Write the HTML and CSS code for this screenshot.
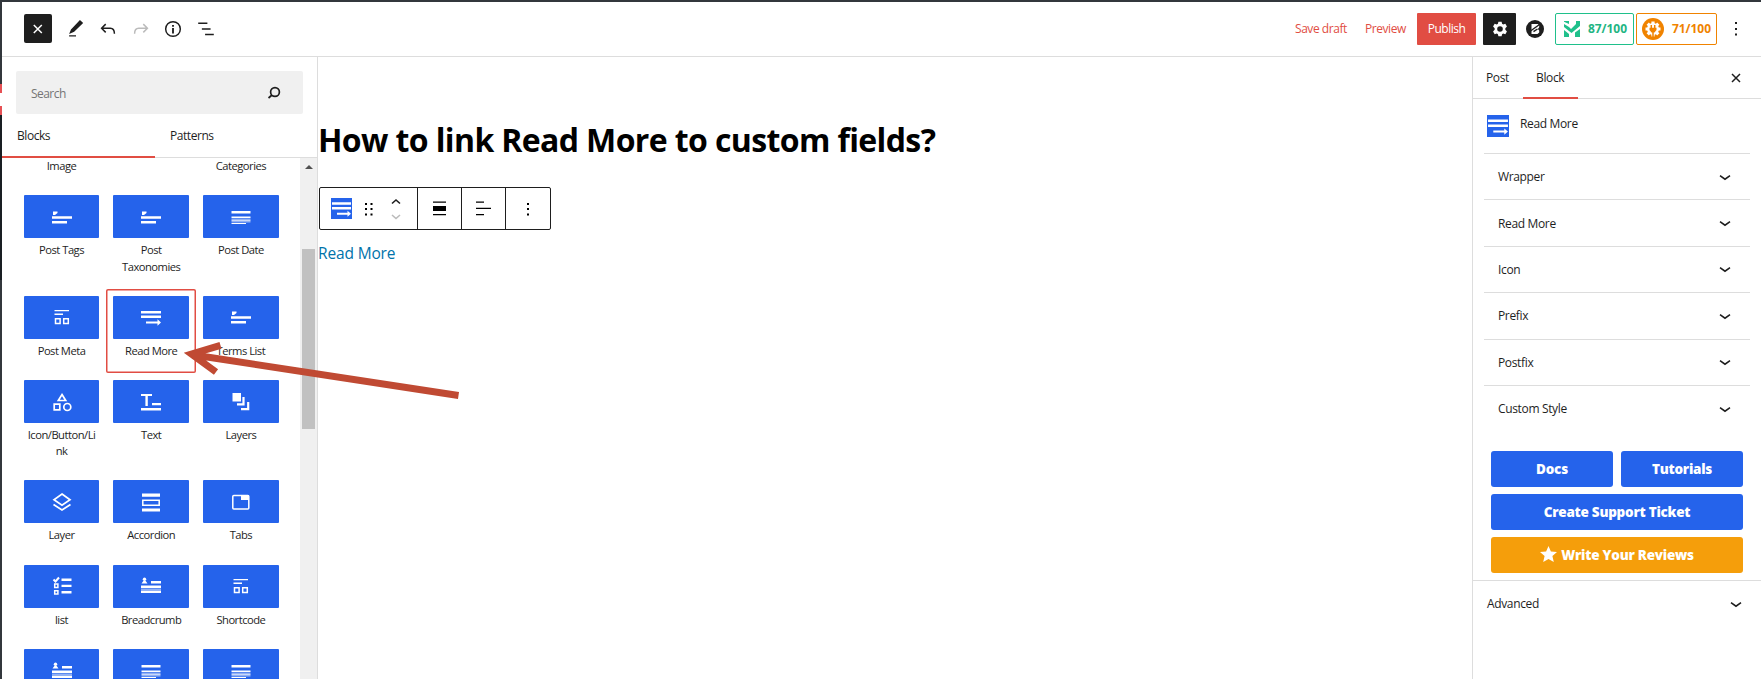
FILE: index.html
```html
<!DOCTYPE html>
<html lang="en">
<head>
<meta charset="utf-8">
<title>Edit Post</title>
<link rel="stylesheet" href="styles.css">
</head>
<body>
<svg width="0" height="0" class="defs">
  <symbol id="tag" viewBox="0 0 20 20"><path d="M0 9.200h20v2.500H0zM0 14h15v2.500H0zM1 8V4.500h4.500V6L3 8z"/></symbol>
  <symbol id="date" viewBox="0 0 20 20"><path d="M.5 4h19v2.500H.5zM.5 9.500h19v1.800H.5zM.5 12.500h19v1.200H.5zM.5 14.500h19v.8H.5zM.5 16H15v1H.5z"/></symbol>
  <symbol id="meta" viewBox="0 0 20 20"><path d="M2.500 3H17v1.200H2.500zM2.500 6.500H11V8H2.500z"/><path d="M3.500 11.700h4.600v4.800H3.500zM11.700 11.700h4.600v4.800h-4.600z" fill="none" stroke="#fff" stroke-width="1.500"/></symbol>
  <symbol id="more" viewBox="0 0 20 20"><path d="M0 4h20v2.500H0zM0 8.500h20V11H0zM5 14.500h11.500v-2.200l3.500 3.200-3.500 3.200v-2.200H5z"/></symbol>
  <symbol id="shapes" viewBox="0 0 20 20"><path d="M10 2.500l3.700 6H6.300zM2.200 12.200h5.600v5.600H2.200z" fill="none" stroke="#fff" stroke-width="1.700"/><circle cx="15.300" cy="15" r="3.500" fill="none" stroke="#fff" stroke-width="1.700"/></symbol>
  <symbol id="text" viewBox="0 0 20 20"><path d="M0 2h11v2H6.800v10H4.400V4H0zM11 11h9v2.300h-9zM0 16h20v2.500H0z"/></symbol>
  <symbol id="layers" viewBox="0 0 20 20"><path d="M1.500 1H10v8.500H1.500z"/><path d="M12.500 5v7.300H6M17.200 10v7.200H10" fill="none" stroke="#fff" stroke-width="2.200"/></symbol>
  <symbol id="layer" viewBox="0 0 20 20"><path d="M10 2l8 5.800-8 5.400-8-5.400zM1.500 12.500L10 18l8.500-5.500" fill="none" stroke="#fff" stroke-width="1.700"/></symbol>
  <symbol id="accordion" viewBox="0 0 20 20"><path d="M1 1.500h18v3.300H1zM1 16.500h18v3H1z"/><path d="M1.800 8.200h16.400v5H1.800z" fill="none" stroke="#fff" stroke-width="1.500"/></symbol>
  <symbol id="tabs" viewBox="0 0 20 20"><rect x="1.800" y="3.500" width="16" height="13.500" rx="1" fill="none" stroke="#fff" stroke-width="1.500"/><path d="M10 3h8v5h-8z"/></symbol>
  <symbol id="list" viewBox="0 0 20 20"><path d="M9.500 2.500h10V5h-10zM9.500 8.700h10v2.400h-10zM9.500 15h10v2.400h-10z"/><path d="M1.500 3.500l2 2L7 1.500" fill="none" stroke="#fff" stroke-width="2"/><path d="M2.700 8.100h3.200v3.400H2.700zM2.700 14.700h3.200v3.200H2.700z" fill="none" stroke="#fff" stroke-width="1.500"/></symbol>
  <symbol id="crumb" viewBox="0 0 20 20"><circle cx="3.500" cy="3.200" r="1.700"/><path d="M.5 7.500l2-2.700h2l2 2.700zM10 5h10v2.500H10zM0 9.500h20V12H0zM0 12.800h20v.8H0zM0 14.500h20V17H0z"/></symbol>
  <symbol id="chev" viewBox="0 0 12 8"><path d="M1 1.700l5 3.500 5-3.500" fill="none" stroke="#1e1e1e" stroke-width="1.600"/></symbol>
</svg>

<div class="app">
  <div class="admin-edge"></div>
  <div class="editor">
    <header class="header">
      <div class="tools">
        <button class="toggle"><svg width="28" height="29" viewBox="0 0 28 29"><path d="M9.800 11l8 8M17.800 11l-8 8" stroke="#fff" stroke-width="1.500"/></svg></button>
        <svg class="tool first" viewBox="0 0 24 24"><path d="M4.500 17.500l2-5L16.300 2.200l3.500 3.300-9.800 9.500zM4.500 18.800H12v1.500H4.500z"/></svg>
        <svg class="tool" viewBox="0 0 24 24"><path d="M9.500 6.700L5 11.200l4.500 4.500M5 11.200h9.500c3 0 4.500 1.500 4.500 6" fill="none" stroke="#1e1e1e" stroke-width="1.600"/></svg>
        <svg class="tool" viewBox="0 0 24 24"><path d="M14.500 6.700l4.500 4.500-4.500 4.500M19 11.200H9.500c-3 0-4.500 1.500-4.500 6" fill="none" stroke="#bbb" stroke-width="1.600"/></svg>
        <svg class="tool" viewBox="0 0 24 24"><circle cx="12" cy="12" r="8" fill="none" stroke="#1e1e1e" stroke-width="1.600"/><path d="M11 7.500h2v2h-2zM11 10.800h2V17h-2z"/></svg>
        <svg class="tool" viewBox="0 0 24 24"><path d="M3.500 5h10v1.500h-10zM7.500 11.200h9.500v1.500H7.500zM11 17.300h9.500v1.500H11z"/></svg>
      </div>
      <div class="actions">
        <a class="link save">Save draft</a>
        <a class="link preview">Preview</a>
        <button class="publish">Publish</button>
        <button class="settings"><svg width="16" height="16" viewBox="0 0 24 24"><path d="M9.600 1h4.800l.7 3.200 1.700 1 3.200-1 2.400 4.200-2.400 2.400v2.400l2.400 2.400-2.400 4.200-3.200-1-1.700 1-.7 3.200H9.600l-.7-3.200-1.700-1-3.200 1-2.400-4.200L4 13.200v-2.400L1.600 8.400 4 4.200l3.200 1 1.700-1z" fill="#fff"/><circle cx="12" cy="12" r="4.200" fill="#1e1e1e"/></svg></button>
        <svg class="blockera" width="18" height="18" viewBox="0 0 18 18"><circle cx="9" cy="9" r="9" fill="#1e1e1e"/><path d="M5.500 4h6.300l1.400 1.300v2L11.900 9l1.300 1.500v2L11.500 14h-6z" fill="#fff"/><path d="M4.500 11L13.500 4.500M7.500 11.700l4-2.700" stroke="#1e1e1e" stroke-width="1.400"/></svg>
        <div class="score green"><svg width="16" height="16" viewBox="0 0 16 16"><path d="M0 0h5v3L0 .8zM0 3l5 3 2 2 5-5V0h4v5l-8.500 7L0 6zM0 9l5 4v3H0zM11 11.500L16 8v8h-5z" fill="#1fc08b"/></svg><span>87/100</span></div>
        <div class="score orange"><svg width="22" height="22" viewBox="0 0 22 22"><circle cx="11" cy="11" r="11" fill="#f08300"/><g stroke="#fff" stroke-width="3.200"><path d="M11 3.500v15M3.500 11h15M5.700 5.700l10.600 10.600M16.300 5.700L5.700 16.300"/></g><circle cx="11" cy="11" r="6" fill="#fff"/><path d="M9.300 7v3M12.700 7v3M11 13v6" stroke="#f08300" stroke-width="1.500"/><path d="M7.500 9.700h7V12L12.500 14.500h-3L7.500 12z" fill="#f08300"/></svg><span>71/100</span></div>
        <svg class="kebab" width="4" height="16" viewBox="0 0 4 16"><path d="M1 1h2v2H1zM1 7h2v2H1zM1 12.500h2v2H1z" fill="#1e1e1e"/></svg>
      </div>
    </header>

    <div class="body">
      <aside class="inserter">
        <div class="search"><span>Search</span><svg width="14" height="14" viewBox="0 0 14 14"><circle cx="8" cy="6" r="4.400" fill="none" stroke="#1e1e1e" stroke-width="1.700"/><path d="M5 9l-3.500 3" stroke="#1e1e1e" stroke-width="1.700"/></svg></div>
        <div class="tabs"><div class="tab active">Blocks</div><div class="tab">Patterns</div></div>
        <div class="scroller">
          <div class="grid">
            <div class="cut">Image</div><div class="cut"></div><div class="cut">Categories</div>
            <div class="cell"><i><svg><use href="#tag"/></svg></i><span>Post Tags</span></div>
            <div class="cell"><i><svg><use href="#tag"/></svg></i><span>Post Taxonomies</span></div>
            <div class="cell"><i><svg><use href="#date"/></svg></i><span>Post Date</span></div>
            <div class="cell"><i><svg><use href="#meta"/></svg></i><span>Post Meta</span></div>
            <div class="cell picked"><i><svg><use href="#more"/></svg></i><span>Read More</span></div>
            <div class="cell"><i><svg><use href="#tag"/></svg></i><span>Terms List</span></div>
            <div class="cell"><i><svg><use href="#shapes"/></svg></i><span>Icon/Button/Li<br>nk</span></div>
            <div class="cell"><i><svg><use href="#text"/></svg></i><span>Text</span></div>
            <div class="cell"><i><svg><use href="#layers"/></svg></i><span>Layers</span></div>
            <div class="cell"><i><svg><use href="#layer"/></svg></i><span>Layer</span></div>
            <div class="cell"><i><svg><use href="#accordion"/></svg></i><span>Accordion</span></div>
            <div class="cell"><i><svg><use href="#tabs"/></svg></i><span>Tabs</span></div>
            <div class="cell"><i><svg><use href="#list"/></svg></i><span>list</span></div>
            <div class="cell"><i><svg><use href="#crumb"/></svg></i><span>Breadcrumb</span></div>
            <div class="cell"><i><svg><use href="#meta"/></svg></i><span>Shortcode</span></div>
            <div class="cell"><i><svg><use href="#crumb"/></svg></i></div>
            <div class="cell"><i><svg><use href="#date"/></svg></i></div>
            <div class="cell"><i><svg><use href="#date"/></svg></i></div>
          </div>
          <div class="scrollbar"><svg width="8" height="4" viewBox="0 0 8 4"><path d="M0 4l4-4 4 4z" fill="#505050"/></svg><div class="thumb"></div></div>
        </div>
      </aside>

      <main class="canvas">
        <h1>How to link Read More to custom fields?</h1>
        <div class="toolbar">
          <div class="group wide">
            <svg width="21" height="21" viewBox="0 0 21 21"><path d="M0 0h21v21H0z" fill="#2563eb"/><path d="M1 4.300h19v2.500H1zM1 9h19v2.500H1zM6 14.800h10.500v-2l3.500 3-3.500 3v-2H6z" fill="#fff"/></svg>
            <svg class="drag" width="8" height="14" viewBox="0 0 8 14"><path d="M0 1h2v2H0zM5.500 1h2v2h-2zM0 6h2v2H0zM5.500 6h2v2h-2zM0 11.500h2v2H0zM5.500 11.500h2v2h-2z"/></svg>
            <svg class="mover" width="10" height="22" viewBox="0 0 10 22"><path d="M1 5.500L5 2l4 3.500" fill="none" stroke="#1e1e1e" stroke-width="1.600"/><path d="M1 17l4 3.500L9 17" fill="none" stroke="#bbb" stroke-width="1.600"/></svg>
          </div>
          <div class="group"><svg width="13" height="15" viewBox="0 0 13 15"><path d="M0 .5h13v1.200H0zM0 5h13v5H0zM0 13h13v1.200H0z"/></svg></div>
          <div class="group"><svg width="15" height="15" viewBox="0 0 15 15"><path d="M0 .5h8v1.200H0zM0 6.700h15v1.200H0zM0 13h8v1.200H0z"/></svg></div>
          <div class="group"><svg width="4" height="14" viewBox="0 0 4 14"><path d="M1 1h2v2H1zM1 6h2v2H1zM1 11.500h2v2H1z"/></svg></div>
        </div>
        <a class="readmore">Read More</a>
      </main>

      <aside class="sidebar">
        <div class="side-tabs"><span class="post">Post</span><span class="block">Block</span><svg width="10" height="10" viewBox="0 0 10 10"><path d="M1 1l8 8M9 1L1 9" stroke="#1e1e1e" stroke-width="1.500"/></svg></div>
        <div class="card"><svg width="22" height="22" viewBox="0 0 21 21"><path d="M0 0h21v21H0z" fill="#2563eb"/><path d="M1 4.300h19v2.500H1zM1 9h19v2.500H1zM6 14.800h10.500v-2l3.500 3-3.500 3v-2H6z" fill="#fff"/></svg><span>Read More</span></div>
        <div class="panels">
          <div class="panel">Wrapper<svg><use href="#chev"/></svg></div>
          <div class="panel">Read More<svg><use href="#chev"/></svg></div>
          <div class="panel">Icon<svg><use href="#chev"/></svg></div>
          <div class="panel">Prefix<svg><use href="#chev"/></svg></div>
          <div class="panel">Postfix<svg><use href="#chev"/></svg></div>
          <div class="panel">Custom Style<svg><use href="#chev"/></svg></div>
        </div>
        <div class="buttons">
          <a class="btn">Docs</a><a class="btn">Tutorials</a>
          <a class="btn full">Create Support Ticket</a>
          <a class="btn full review"><svg width="17" height="17" viewBox="0 0 17 17"><path d="M8.500 0l2.400 5.600 6.100.5-4.600 4 1.400 6-5.300-3.200-5.300 3.200 1.400-6L0 6.100l6.100-.5z" fill="#fff"/></svg><span>Write Your Reviews</span></a>
        </div>
        <div class="panel advanced">Advanced<svg><use href="#chev"/></svg></div>
      </aside>
    </div>
  </div>
  <svg class="arrow" width="290" height="60" viewBox="0 0 290 60"><path d="M286.500 55.500L22 15M48.500 5.300L19.500 14 44 32" fill="none" stroke="#c04a33" stroke-width="7"/></svg>
</div>
</body>
</html>
```

FILE: styles.css
```css
* { box-sizing: border-box; }
body { margin: 0; font-family: "Open Sans", "Noto Sans", sans-serif; font-size: 12px; letter-spacing: -.35px; color: #1e1e1e; background: #fff; }
button { border: 0; padding: 0; font: inherit; letter-spacing: inherit; }
svg { display: block; flex: none; }
.defs { position: absolute; }
.app { position: relative; display: flex; width: 1761px; height: 679px; overflow: hidden; border-top: 2px solid #32373c; }
.admin-edge { width: 2px; background: linear-gradient(#32373c 0 82px, #e65054 82px 91px, #fff 91px 104px, #e65054 104px 113px, #191e23 113px 278px, #32373c 278px); }
.editor { flex: 1; display: flex; flex-direction: column; min-width: 0; }
.header { height: 55px; flex: none; border-bottom: 1px solid #ddd; display: flex; justify-content: space-between; padding-top: 11px; }
.tools { display: flex; padding: 1px 0 0 22px; align-items: flex-start; }
.toggle { width: 28px; height: 29px; background: #1e1e1e; border-radius: 2px; }
.tool { width: 22px; height: 22px; margin: 4px 5.200px 0; fill: #1e1e1e; }
.tool.first { margin-left: 13px; }
.actions { display: flex; align-items: center; height: 32px; color: #e14d43; }
.link { margin-top: -1px; letter-spacing: -.450px; }
.save { width: 70px; }
.preview { width: 52px; }
.publish { width: 59px; height: 32px; padding-bottom: 1px; background: #e14d43; color: #fff; border-radius: 1px; letter-spacing: -.500px; }
.settings { width: 33px; height: 32px; background: #1e1e1e; border-radius: 1px; margin-left: 7px; display: flex; align-items: center; justify-content: center; }
.blockera { margin: 0 11px 0 10px; }
.score { width: 79px; height: 32px; border: 1px solid; border-radius: 2px; display: flex; align-items: center; font-weight: 700; font-size: 12px; letter-spacing: -.050px; }
.score span { margin-top: -1px; }
.green { color: #1fb583; border-color: #1fc08b; padding-left: 8px; gap: 8px; }
.orange { width: 81px; color: #f08300; margin-left: 2px; padding-left: 5px; gap: 8px; }
.kebab { margin: 0 23px 0 17px; }
.body { flex: 1; display: flex; min-height: 0; }
.inserter { width: 316px; border-right: 1px solid #ddd; padding-top: 14px; display: flex; flex-direction: column; }
.search { width: 287px; height: 43px; flex: none; margin-left: 14px; padding: 0 22px 0 15px; background: #f0f0f0; border-radius: 2px; display: flex; align-items: center; justify-content: space-between; color: #757575; letter-spacing: -.550px; }
.search span { margin-top: 1px; }
.tabs { height: 44px; flex: none; display: flex; border-bottom: 1px solid #ddd; }
.tab { width: 153px; height: 44px; padding-left: 15px; line-height: 43px; letter-spacing: -.450px; font-weight: 500; }
.tab.active { border-bottom: 2px solid #e14d43; }
.scroller { flex: 1; min-height: 0; overflow: hidden; display: flex; justify-content: space-between; }
.grid { display: grid; grid-template-columns: repeat(3, 89.700px); grid-auto-rows: max-content; margin-left: 14.700px; align-content: start; font-size: 11.200px; line-height: 16.200px; text-align: center; letter-spacing: -.500px; }
.cut { height: 30.300px; line-height: 15px; }
.cell { padding: 7px 7px 14px; min-height: 84.350px; }
.cell i { display: flex; align-items: center; justify-content: center; height: 43px; margin-bottom: 4px; background: #2563eb; border-radius: 1px; }
.cell i svg { width: 20px; height: 20px; fill: #fff; }
.cell span { display: block; }
.picked { box-shadow: inset 0 0 0 1.500px #e14d43; border-radius: 2px; }
.scrollbar { width: 17px; background: #f0f0f0; display: flex; flex-direction: column; align-items: center; padding-top: 7px; }
.thumb { width: 13px; height: 180px; margin-top: 80px; background: #c1c1c1; }
.canvas { flex: 1; padding-left: 1px; }
.canvas h1 { margin: 61px 0 0 -1px; font-size: 32px; line-height: 44px; color: #000; white-space: nowrap; letter-spacing: -.620px; }
.toolbar { width: 232px; height: 43px; margin-top: 25px; border: 1px solid #1e1e1e; border-radius: 2px; display: flex; }
.group { width: 44px; display: flex; align-items: center; justify-content: center; }
.group + .group { border-left: 1px solid #1e1e1e; }
.group.wide { width: 97px; justify-content: flex-start; padding-left: 11px; }
.drag { margin-left: 13px; }
.mover { margin-left: 18px; }
.readmore { display: block; margin: 11px 0 0 -1px; font-size: 15.500px; line-height: 24px; letter-spacing: -.150px; color: #0073aa; }
.sidebar { width: 289px; border-left: 1px solid #ddd; }
.side-tabs { height: 42px; border-bottom: 1px solid #ddd; display: flex; align-items: center; padding-left: 13px; }
.side-tabs .post { width: 37px; }
.side-tabs .block { width: 55px; height: 42px; padding-left: 13px; line-height: 42px; border-bottom: 2px solid #e14d43; }
.side-tabs svg { margin-left: 153px; }
.card { display: flex; height: 54px; padding: 16px 0 0 14px; gap: 11px; }
.panels { margin: 0 11px; }
.panel { height: 46.400px; border-top: 1px solid #ddd; padding: 0 19px 0 14px; display: flex; align-items: center; justify-content: space-between; }
.panel svg { width: 12px; height: 8px; margin-top: 2px; }
.buttons { display: grid; grid-template-columns: 122px 122px; gap: 7px 8px; margin: 19.600px 0 7px 18px; }
.btn { height: 36px; background: #2563eb; border-radius: 3px; color: #fff; font-size: 13.500px; font-weight: 800; letter-spacing: -.250px; display: flex; align-items: center; justify-content: center; gap: 4px; }
.full { grid-column: span 2; }
.review { background: #f59e0b; }
.advanced { height: 47px; padding: 0 19px 0 14px; }
.arrow { position: absolute; left: 172px; top: 338px; }
```
